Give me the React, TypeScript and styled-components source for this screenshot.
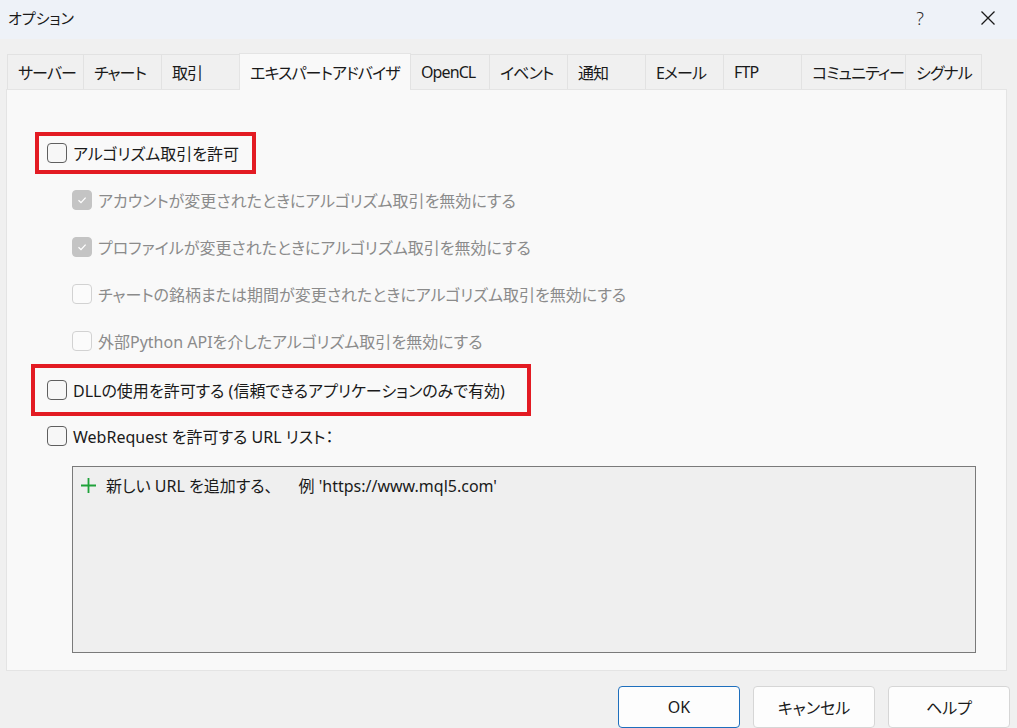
import * as React from 'react';
import styled, { createGlobalStyle, css } from 'styled-components';

const GlobalStyle = createGlobalStyle`
  html, body {
    margin: 0;
    padding: 0;
    background: #f0f0f0;
  }
  body {
    font-family: 'Noto Sans', 'Noto Sans CJK JP', sans-serif;
    font-feature-settings: 'palt';
    color: #1a1a1a;
  }
`;

// tab widths measured from the dialog, labels stay left aligned
const tabs = [
  { label: 'サーバー', width: 77 },
  { label: 'チャート', width: 79 },
  { label: '取引', width: 79 },
  { label: 'エキスパートアドバイザ', width: 172 },
  { label: 'OpenCL', width: 80 },
  { label: 'イベント', width: 79 },
  { label: '通知', width: 79 },
  { label: 'Eメール', width: 79 },
  { label: 'FTP', width: 79 },
  { label: 'コミュニティー', width: 105 },
  { label: 'シグナル', width: 77 }
];

const subOptions = [
  { label: 'アカウントが変更されたときにアルゴリズム取引を無効にする', checked: true },
  { label: 'プロファイルが変更されたときにアルゴリズム取引を無効にする', checked: true },
  { label: 'チャートの銘柄または期間が変更されたときにアルゴリズム取引を無効にする', checked: false },
  { label: '外部Python APIを介したアルゴリズム取引を無効にする', checked: false }
];

const Checkbox = ({ checked, disabled }: { checked?: boolean; disabled?: boolean }) => (
  <Box checked={checked} disabled={disabled}>
    {checked && (
      <svg width="12" height="12" viewBox="0 0 12 12">
        <path d="M2.5 6.2 L5 8.6 L9.6 3.6" fill="none" stroke="#fff" strokeWidth="1.3" />
      </svg>
    )}
  </Box>
);

const App = (): JSX.Element => (
  <Window>
    <GlobalStyle />
    <TitleBar>
      <Title>オプション</Title>
      <TitleButtons>
        <HelpMark>?</HelpMark>
        <svg width="16" height="16" viewBox="0 0 16 16">
          <path d="M1.5 1.5 L14.5 14.5 M14.5 1.5 L1.5 14.5" stroke="#1a1a1a" strokeWidth="1.3" />
        </svg>
      </TitleButtons>
    </TitleBar>

    <TabStrip>
      {tabs.map(t => (
        <Tab key={t.label} width={t.width} active={t.label === 'エキスパートアドバイザ'}>
          {t.label}
        </Tab>
      ))}
    </TabStrip>

    <Panel>
      <Highlight width={221} height={42} left={29} inner={8}>
        <CheckRow>
          <Checkbox />
          <Label>アルゴリズム取引を許可</Label>
        </CheckRow>
      </Highlight>

      <SubList>
        {subOptions.map(o => (
          <SubRow key={o.label}>
            <Checkbox checked={o.checked} disabled />
            <Label disabled>{o.label}</Label>
          </SubRow>
        ))}
      </SubList>

      <Highlight width={500} height={52} left={25} inner={12}>
        <CheckRow>
          <Checkbox />
          <Label>DLLの使用を許可する (信頼できるアプリケーションのみで有効)</Label>
        </CheckRow>
      </Highlight>

      <PlainRow>
        <Checkbox />
        <Label>WebRequest を許可する URL リスト：</Label>
      </PlainRow>

      <UrlList>
        <UrlRow>
          <svg width="17" height="17" viewBox="0 0 17 17">
            <path d="M8.5 1 V16 M1 8.5 H16" stroke="#1fa23a" strokeWidth="1.8" />
          </svg>
          <span>
            新しい URL を追加する、<Example>例 'https://www.mql5.com'</Example>
          </span>
        </UrlRow>
      </UrlList>
    </Panel>

    <Footer>
      <Button primary>OK</Button>
      <Button>キャンセル</Button>
      <Button>ヘルプ</Button>
    </Footer>
  </Window>
);

export default App;

const Window = styled.div`
  width: 1017px;
  height: 728px;
  overflow: hidden;
  background: #f0f0f0;
  display: flex;
  flex-direction: column;
`;

const TitleBar = styled.div`
  height: 39px;
  flex-shrink: 0;
  background: #eef2f8;
  display: flex;
  align-items: center;
  justify-content: space-between;
  padding: 0 21px 0 8px;
`;

const Title = styled.div`
  font-size: 15px;
  margin-top: -4px;
`;

const TitleButtons = styled.div`
  display: flex;
  align-items: center;
  gap: 56px;
  margin-top: -4px;
`;

const HelpMark = styled.span`
  font-size: 18px;
  font-weight: 300;
  color: #2a2a2a;
`;

const TabStrip = styled.div`
  display: flex;
  align-items: flex-end;
  margin: 14px 0 0 7px;
  height: 36px;
  position: relative;
  z-index: 1;
`;

const Tab = styled.div<{ active?: boolean; width: number }>`
  box-sizing: border-box;
  width: ${p => p.width}px;
  height: 35px;
  padding: 0 0 0 10px;
  display: flex;
  align-items: center;
  font-size: 16px;
  letter-spacing: -0.9px;
  white-space: nowrap;
  overflow: hidden;
  background: #f0f0f0;
  border: 1px solid #e2e2e2;
  border-bottom: none;
  margin-right: -1px;

  ${props =>
    props.active &&
    css`
      height: 37px;
      background: #f9f9f9;
      border-color: #e4e4e4;
      margin-bottom: -1px;
    `}
`;

const Panel = styled.div`
  box-sizing: border-box;
  margin: 0 10px 0 6px;
  height: 582px;
  background: #f9f9f9;
  border: 1px solid #e4e4e4;
  display: flex;
  flex-direction: column;
  align-items: flex-start;
  padding-top: 42px;
`;

const Highlight = styled.div<{ width: number; height: number; left: number; inner: number }>`
  box-sizing: border-box;
  width: ${p => p.width}px;
  height: ${p => p.height}px;
  margin-left: ${p => p.left - 1}px;
  padding-left: ${p => p.inner}px;
  border: 4px solid #e31b23;
  display: flex;
  align-items: center;
`;

const CheckRow = styled.div`
  display: flex;
  align-items: center;
  gap: 6px;
`;

const SubList = styled.div`
  display: flex;
  flex-direction: column;
  margin-top: 2px;
`;

const SubRow = styled(CheckRow)`
  height: 47px;
  padding-left: 65px;
`;

const PlainRow = styled(CheckRow)`
  height: 40px;
  padding-left: 40px;
`;

const Box = styled.span<{ checked?: boolean; disabled?: boolean }>`
  box-sizing: border-box;
  width: 20px;
  height: 20px;
  border-radius: 4px;
  border: 1px solid #5f5f5f;
  background: #f7f7f7;
  display: flex;
  align-items: center;
  justify-content: center;
  flex-shrink: 0;

  ${props =>
    props.disabled &&
    css`
      border-color: #d2d2d2;
      background: #fbfbfb;
    `}

  ${props =>
    props.checked &&
    css`
      border-color: #c4c4c4;
      background: #c4c4c4;
    `}
`;

const Label = styled.span<{ disabled?: boolean }>`
  font-size: 16px;
  white-space: nowrap;
  color: ${p => (p.disabled ? '#8b8b8b' : '#1a1a1a')};
`;

const UrlList = styled.div`
  box-sizing: border-box;
  margin: 10px 0 0 65px;
  width: 904px;
  height: 187px;
  border: 1px solid #7a7a7a;
  background: #efefef;
  padding: 6px 0 0 7px;
`;

const UrlRow = styled.div`
  display: flex;
  align-items: center;
  gap: 9px;
  height: 24px;
  font-size: 16px;
  white-space: nowrap;
`;

const Example = styled.span`
  margin-left: 26px;
`;

const Footer = styled.div`
  display: flex;
  justify-content: flex-end;
  gap: 13px;
  padding: 15px 7px 0 0;
`;

const Button = styled.button<{ primary?: boolean }>`
  box-sizing: border-box;
  width: 122px;
  height: 42px;
  border-radius: 4px;
  background: #fdfdfd;
  border: 1px solid #d6d6d6;
  font-family: 'Noto Sans', 'Noto Sans CJK JP', sans-serif;
  font-feature-settings: 'palt';
  font-size: 16px;
  color: #1a1a1a;
  padding: 0;

  ${props =>
    props.primary &&
    css`
      border-color: #1e6fbd;
    `}
`;
